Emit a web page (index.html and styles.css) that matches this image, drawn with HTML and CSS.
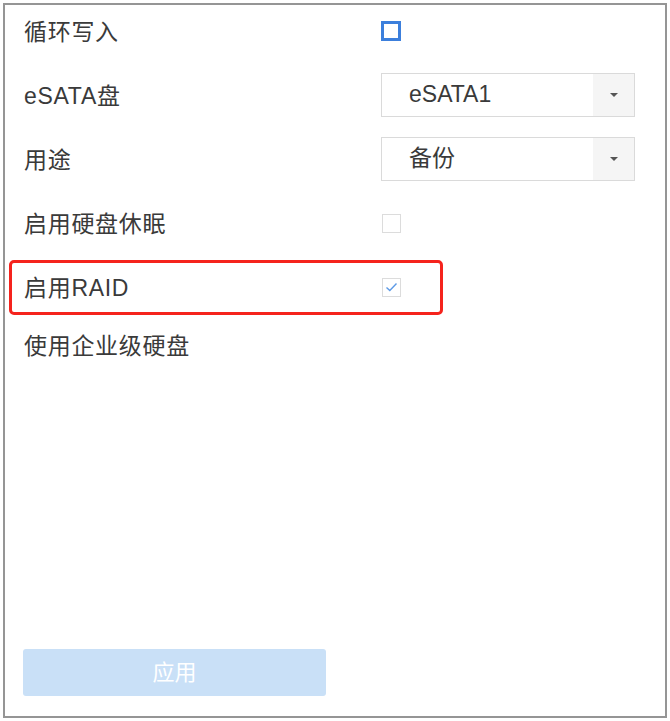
FILE: index.html
```html
<!DOCTYPE html>
<html lang="zh-CN">
<head>
    <meta charset="UTF-8">
    <meta name="viewport" content="width=device-width, initial-scale=1.0">
    <title>硬盘设置</title>
    <link rel="stylesheet" href="styles.css">
</head>
<body>
    <div class="panel">
        <!-- 设置项列表 -->
        <div class="row">
            <span class="label">循环写入</span>
            <span class="check check-focus"></span>
        </div>
        <div class="row">
            <span class="label">eSATA盘</span>
            <div class="select">
                <span class="select-text">eSATA1</span>
                <span class="select-arrow"><i></i></span>
            </div>
        </div>
        <div class="row">
            <span class="label">用途</span>
            <div class="select">
                <span class="select-text">备份</span>
                <span class="select-arrow"><i></i></span>
            </div>
        </div>
        <div class="row">
            <span class="label">启用硬盘休眠</span>
            <span class="check"></span>
        </div>
        <div class="row highlight">
            <span class="label">启用RAID</span>
            <span class="check checked">
                <svg width="13" height="10" viewBox="0 0 13 10"><path d="M1.5 5.5 L4.8 8.5 L11.5 1.5" fill="none" stroke="#5d9ae6" stroke-width="1.4"/></svg>
            </span>
        </div>
        <div class="row last">
            <span class="label">使用企业级硬盘</span>
        </div>
        <!-- 应用按钮 -->
        <button class="apply" disabled>应用</button>
    </div>
</body>
</html>
```

FILE: styles.css
```css
* {
  margin: 0;
  padding: 0;
  box-sizing: border-box;
}
body {
  background: #fff;
  font-family: "Liberation Sans", Arial, "Noto Sans CJK SC", sans-serif;
  color: #333;
}
.panel {
  width: 664px;
  height: 715px;
  margin: 3px 0 0 3px;
  border: 2px solid #959595;
  padding: 4px 0 20px 19px;
  display: flex;
  flex-direction: column;
}
.row {
  height: 44px;
  margin-bottom: 20px;
  display: flex;
  align-items: center;
  position: relative;
}
.row.last {
  margin-bottom: 0;
  margin-top: -6px;
}
.label {
  width: 357px;
  padding-bottom: 3px;
  font-size: 23px;
  letter-spacing: 0.7px;
  color: #3a3a3a;
}
.check {
  width: 19px;
  height: 19px;
  margin-left: 1px;
  border: 1px solid #dcdcdc;
  display: flex;
  align-items: center;
  justify-content: center;
}
.check-focus {
  width: 20px;
  height: 20px;
  margin-left: 0;
  border: 3px solid #3c7fdc;
}
.select {
  width: 254px;
  height: 44px;
  border: 1px solid #dadada;
  display: flex;
}
.select-text {
  flex: 1;
  padding-left: 27px;
  padding-bottom: 3px;
  font-size: 23px;
  line-height: 40px;
  color: #3a3a3a;
}
.select-arrow {
  width: 41px;
  background: #f5f5f5;
  display: flex;
  align-items: center;
  justify-content: center;
}
.select-arrow i {
  width: 0;
  height: 0;
  border-left: 4px solid transparent;
  border-right: 4px solid transparent;
  border-top: 4px solid #555;
}
/* 红色标注框 */
.highlight::after {
  content: "";
  position: absolute;
  left: -15px;
  top: -5px;
  width: 428px;
  height: 49px;
  border: 3px solid #f5231d;
  border-radius: 5px;
}
.apply {
  margin-top: auto;
  width: 303px;
  height: 47px;
  margin-left: -1px;
  padding-bottom: 5px;
  border: none;
  border-radius: 3px;
  background: #c9e0f7;
  color: #fff;
  font: 22px "Noto Sans CJK SC", sans-serif;
}
```
